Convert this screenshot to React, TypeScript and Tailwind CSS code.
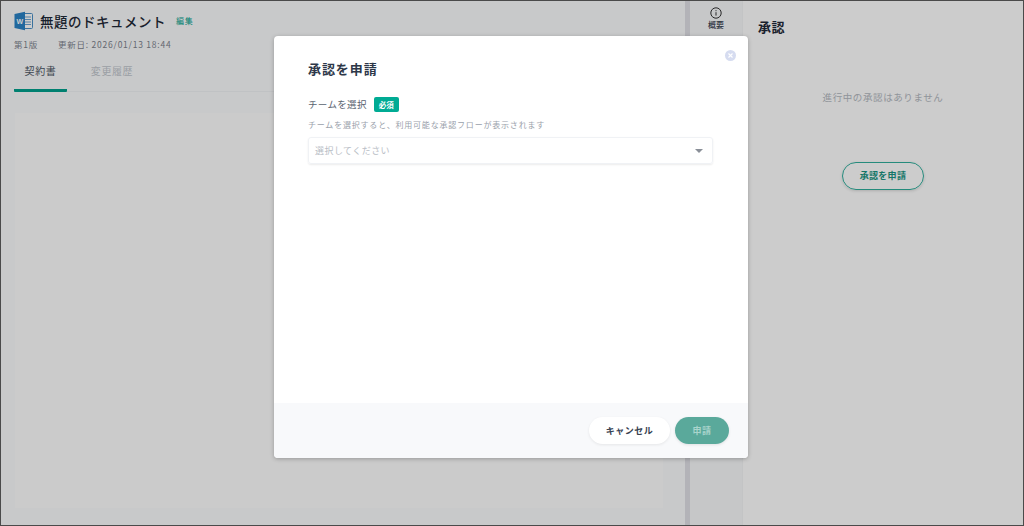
const font = { fontFamily: '"Noto Sans CJK JP", "Noto Sans", sans-serif' };

const WordIcon = () => (
    <svg width="20" height="20" viewBox="0 0 20 20">
        <rect x="6" y="2.5" width="12.5" height="15" rx="1" fill="#fff" stroke="#4a8fc6" strokeWidth="1" />
        <path d="M11 6h6M11 8.5h6M11 11h6M11 13.5h6" stroke="#6aa3d2" strokeWidth="1" />
        <path d="M0.5 3L11 0.8V19.2L0.5 17Z" fill="#2a82c6" />
        <text x="2.6" y="12.6" fontSize="7" fontWeight="700" fill="#fff" fontFamily="Liberation Sans">W</text>
    </svg>
);

const App = () => {
    return (
        <div style={font} className="relative w-[1024px] h-[526px] overflow-hidden bg-white border border-[#4a4a4a]">
            <div className="flex h-full">
                {/* document pane */}
                <div className="w-[684px] flex flex-col bg-[#fbfcfd] border-r-[5px] border-[#e0e0e6] shrink-0 box-content">
                    <div className="pl-[13px] pt-[9px]">
                        <div className="flex items-center h-[22px]">
                            <WordIcon />
                            <span className="ml-[6px] text-[13.5px] font-medium tracking-[0.5px] text-[#1f2937]">無題のドキュメント</span>
                            <span className="ml-[10px] text-[8px] tracking-[0.08em] text-[#00a08c]">編集</span>
                        </div>
                        <div className="flex mt-[5px] text-[8.5px] leading-[14px] tracking-[0.09em] text-[#7d838d]">
                            <span>第1版</span>
                            <span className="ml-[20px]">更新日: 2026/01/13 18:44</span>
                        </div>
                    </div>
                    <div className="mt-[8px] mx-[13px] flex h-[33px] border-b border-[#f1f3f5]">
                        <div className="w-[53px] text-center text-[10px] leading-[23px] tracking-[0.06em] text-[#4b5563] border-b-[3px] border-[#00a08c] rounded-b-[1px] h-[33px]">契約書</div>
                        <div className="w-[78px] pl-[12px] text-center text-[10px] leading-[23px] tracking-[0.06em] text-[#c2c7ce]">変更履歴</div>
                    </div>
                    <div className="flex-1 mt-[21px] ml-[14px] mr-[22px] mb-[17px] bg-[#fefefe]" />
                </div>
                {/* icon rail */}
                <div className="w-[53px] shrink-0 flex flex-col items-center pt-[6px] bg-[#f8f9fb] border-r border-[#f4f5f7]">
                    <svg width="12" height="12" viewBox="0 0 12 12" fill="none" stroke="#333" strokeWidth="1">
                        <circle cx="6" cy="6" r="5.2" />
                        <path d="M6 5.2v3.4M6 3.2v1" />
                    </svg>
                    <span className="text-[8px] leading-[11px] font-medium text-[#374151]">概要</span>
                </div>
                {/* approval panel */}
                <div className="flex-1 flex flex-col bg-white">
                    <div className="pl-[15px] pt-[15px] text-[13px] leading-[22px] font-bold tracking-[0.04em] text-[#1f2937]">承認</div>
                    <div className="mt-[51px] text-center text-[9.5px] leading-[16px] tracking-[0.6px] text-[#b4b9c1]">進行中の承認はありません</div>
                    <div className="mt-[57px] flex justify-center">
                        <div className="w-[82px] h-[28px] rounded-full border border-[#2fae9c] text-center text-[9px] leading-[26px] font-bold tracking-[0.03em] text-[#1a9482] shadow-[0_1px_3px_rgba(0,0,0,0.15)]">承認を申請</div>
                    </div>
                </div>
            </div>

            {/* overlay */}
            <div className="absolute inset-0 bg-[#000]/20" />

            {/* modal */}
            <div className="absolute left-[273px] top-[35px] w-[474px] h-[422px] flex flex-col bg-white rounded-[4px] shadow-[0_1px_4px_rgba(0,0,0,0.25)] overflow-hidden">
                <div className="absolute right-[12px] top-[14px] w-[11px] h-[11px] rounded-full bg-[#d6dcf0] flex items-center justify-center">
                    <svg width="5" height="5" viewBox="0 0 5 5" stroke="#fff" strokeWidth="1.1">
                        <path d="M0.5 0.5L4.5 4.5M4.5 0.5L0.5 4.5" />
                    </svg>
                </div>
                <div className="flex-1 pl-[34px] pr-[35px]">
                    <div className="pt-[23px] text-[13px] leading-[20px] font-bold tracking-[0.07em] text-[#2d3748]">承認を申請</div>
                    <div className="mt-[18px] flex items-center h-[15px]">
                        <span className="text-[9.5px] tracking-[0.35px] text-[#5a6370]">チームを選択</span>
                        <span className="ml-[7px] w-[25px] h-[15px] rounded-[2px] bg-[#00ab94] text-center text-[7.5px] leading-[15px] font-bold text-white">必須</span>
                    </div>
                    <div className="mt-[7px] text-[8px] leading-[12px] tracking-[0.1em] text-[#9aa1ab]">チームを選択すると、利用可能な承認フローが表示されます</div>
                    <div className="mt-[6px] h-[27px] flex items-center justify-between pl-[6px] pr-[9px] rounded-[3px] border border-[#f0f2f5] shadow-[0_1px_2px_rgba(0,0,0,0.08)]">
                        <span className="text-[9px] tracking-[0.05em] text-[#b9bec6]">選択してください</span>
                        <span className="w-0 h-0 border-x-[4px] border-x-transparent border-t-[4px] border-t-[#8a8f98]" />
                    </div>
                </div>
                <div className="h-[55px] flex items-start justify-end gap-[5px] pt-[14px] pr-[19px] bg-[#f8f9fb]">
                    <div className="w-[81px] h-[27px] rounded-full bg-white text-center text-[9px] leading-[27px] font-bold tracking-[0.05em] text-[#374151] shadow-[0_1px_3px_rgba(0,0,0,0.08)]">キャンセル</div>
                    <div className="w-[54px] h-[27px] rounded-full bg-[#5aa99b] text-center text-[9px] leading-[27px] font-bold tracking-[0.05em] text-[#a9d4cc] shadow-[0_1px_3px_rgba(0,0,0,0.1)]">申請</div>
                </div>
            </div>
        </div>
    );
};

export default App;
